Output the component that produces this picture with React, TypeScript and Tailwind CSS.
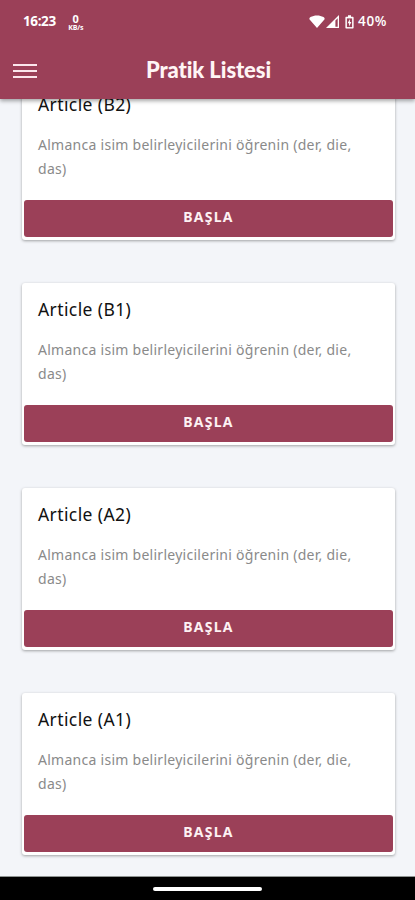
import React from 'react';

interface Practice {
  id: string;
  title: string;
  description: string;
}

const DESCRIPTION = 'Almanca isim belirleyicilerini öğrenin (der, die, das)';

const practices: Practice[] = [
  { id: 'b2', title: 'Article (B2)', description: DESCRIPTION },
  { id: 'b1', title: 'Article (B1)', description: DESCRIPTION },
  { id: 'a2', title: 'Article (A2)', description: DESCRIPTION },
  { id: 'a1', title: 'Article (A1)', description: DESCRIPTION },
];

const StatusBar: React.FC = () => (
  <div className="flex h-[43px] items-center pl-[23px] pr-[28px] font-['Open_Sans',sans-serif] text-white">
    <span className="text-[13.5px] font-bold leading-none tracking-[-0.4px]">16:23</span>
    <div className="ml-[12px] flex w-4 flex-col items-center pt-0.5 font-bold">
      <span className="text-[11px] leading-[10px]">0</span>
      <span className="text-[7px] leading-[7px] tracking-[-0.2px]">KB/s</span>
    </div>
    <div className="ml-auto flex items-center">
      <svg className="h-[13px] w-4" viewBox="0 0 16 13" fill="currentColor">
        <path d="M8 13 0.400 4.200Q0 2.800 1.500 2.100C3.500 1 5.500 0.500 8 0.500s4.500.5 6.500 1.600Q16 2.800 15.600 4.200z" />
      </svg>
      <svg className="ml-px h-[13px] w-[13px]" viewBox="0 0 13 13" fill="none">
        <path d="M0 13 13 0v13z" fill="currentColor" />
        <path d="M9.400 5.500 11.700 3.200v8.500H9.400z" fill="#9b4058" />
      </svg>
      <svg className="ml-[6px] h-[14px] w-[9px]" viewBox="0 0 9 14" fill="none">
        <path d="M3 0.300h3v1.500h1.600c.6 0 1 .4 1 1v9.800c0 .6-.4 1-1 1H1.400c-.6 0-1-.4-1-1V2.800c0-.6.4-1 1-1H3z" fill="currentColor" />
        <path d="M1.900 3.400h5.200v8.700H1.900z" fill="#9b4058" />
        <path d="M4.900 3.900 2.600 8.200h1.500v3.400l2.300-4.500H4.900z" fill="currentColor" />
      </svg>
      <span className="ml-1 text-[13.5px] font-semibold leading-none tracking-[0.6px]">40%</span>
    </div>
  </div>
);

const Header: React.FC = () => (
  <header className="relative z-10 h-[99px] shrink-0 bg-[#9b4058] shadow-[0_2px_4px_rgba(0,0,0,0.35)]">
    <StatusBar />
    <div className="grid h-[56px] grid-cols-[1fr_auto_1fr] items-center px-[13px]">
      <button className="flex w-6 flex-col gap-1" aria-label="Menu">
        <span className="h-0.5 w-full bg-[#fbe6ec]" />
        <span className="h-0.5 w-full bg-[#fbe6ec]" />
        <span className="h-0.5 w-full bg-[#fbe6ec]" />
      </button>
      <h1 className="-mt-0.5 ml-0.5 font-['Lato',sans-serif] text-[22px] font-black leading-7 tracking-[-0.1px] text-[#fff5f5]">
        Pratik Listesi
      </h1>
    </div>
  </header>
);

const PracticeCard: React.FC<{ practice: Practice }> = ({ practice }) => (
  <article className="flex h-[162px] flex-col rounded-[3px] bg-white px-0.5 pb-[3px] shadow-[0_1px_3px_rgba(0,0,0,0.35)]">
    <div className="flex-1 px-3.5 pt-[14px]">
      <h2 className="text-[17.500px] leading-6 tracking-[0.4px] text-[#111111]">{practice.title}</h2>
      <p className="mt-[17px] whitespace-nowrap text-[14px] leading-6 tracking-[0.27px] text-[#8a8a8a]">
        {practice.description.replace(' das)', '')}
        <br />
        das)
      </p>
    </div>
    <button className="h-[37px] w-full rounded-[3px] bg-[#9b4058] pb-[3px] text-[14px] font-bold leading-none tracking-[1.3px] text-[#fdf1f3]">
      BAŞLA
    </button>
  </article>
);

const App: React.FC = () => (
  <div className="flex h-[900px] w-[415px] flex-col overflow-hidden bg-[#f3f5f9] font-['Noto_Sans',sans-serif]">
    <Header />
    <main className="min-h-0 flex-1 overflow-hidden">
      <div className="-mt-[21px] flex flex-col gap-[43px] pl-[22px] pr-5">
        {practices.map((practice) => (
          <PracticeCard key={practice.id} practice={practice} />
        ))}
      </div>
    </main>
    <footer className="flex h-6 shrink-0 items-center justify-center border-t border-[#8f9492] bg-black">
      <div className="h-1 w-[109px] rounded-full bg-white" />
    </footer>
  </div>
);

export default App;
